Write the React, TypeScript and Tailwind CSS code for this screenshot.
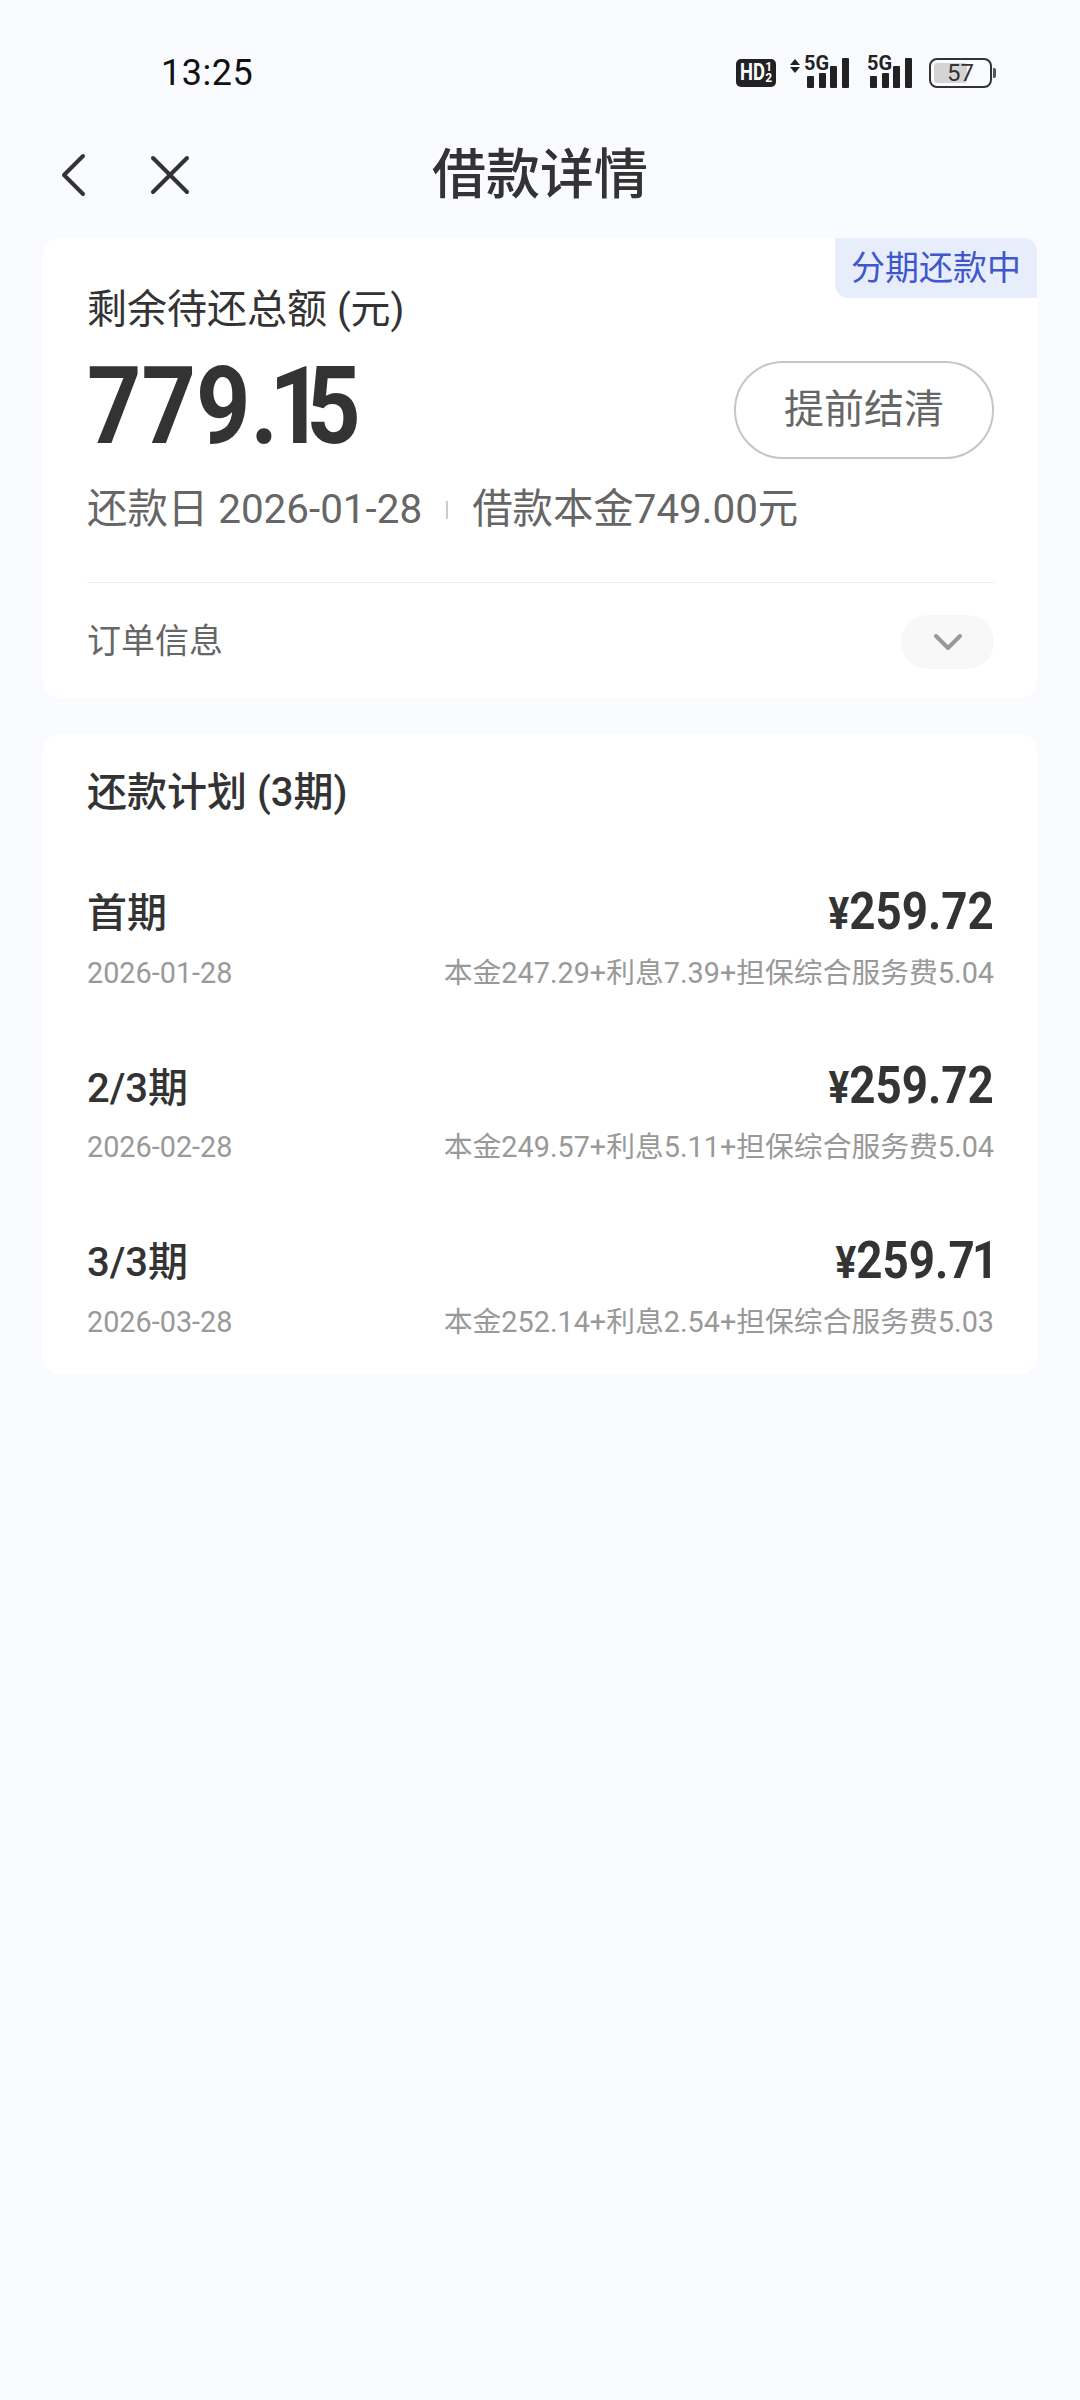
const font = "font-['Roboto','Noto_Sans_CJK_SC',sans-serif]";

const plans = [
  { name: "首期", amount: "259.72", date: "2026-01-28", detail: "本金247.29+利息7.39+担保综合服务费5.04" },
  { name: "2/3期", amount: "259.72", date: "2026-02-28", detail: "本金249.57+利息5.11+担保综合服务费5.04" },
  { name: "3/3期", amount: "259.71", date: "2026-03-28", detail: "本金252.14+利息2.54+担保综合服务费5.03" },
];

function Signal() {
  return (
    <div className="flex items-end gap-[4.67px] h-[30px]">
      <div className="w-[7px] h-[12px] rounded-[1px] bg-[#222]" />
      <div className="w-[7px] h-[15px] rounded-[1px] bg-[#222]" />
      <div className="w-[7px] h-[22px] rounded-[1px] bg-[#222]" />
      <div className="w-[7px] h-[30px] rounded-[1px] bg-[#222]" />
    </div>
  );
}

function FiveG() {
  return (
    <div className="absolute left-0 top-[-5px] text-[21px] leading-[20px] font-bold text-[#222] scale-x-[.95] origin-left">5G</div>
  );
}

function StatusBar() {
  return (
    <div className="flex items-center justify-between h-[114px] pl-[161px] pr-[84px] pt-[31px] text-[#111]">
      <div className="text-[36px] leading-[40px] tracking-[0.5px]">13:25</div>
      <div className="flex items-center">
        <div className="flex items-center w-[40px] h-[28px] rounded-[5px] bg-[#222] text-white font-bold pl-[4px]">
          <span className="text-[23px] leading-none scale-x-[.8] origin-left mr-[-6px]">HD</span>
          <span className="flex flex-col text-[12px] leading-[11px]">
            <span>1</span>
            <span>2</span>
          </span>
        </div>
        <div className="flex flex-col items-center gap-[2px] ml-[14px] mb-[14px]">
          <svg width="10" height="6" viewBox="0 0 10 6"><polygon points="5,0 10,6 0,6" fill="#222" /></svg>
          <svg width="10" height="6" viewBox="0 0 10 6"><polygon points="0,0 10,0 5,6" fill="#222" /></svg>
        </div>
        <div className="relative ml-[4px] pl-[3px]">
          <FiveG />
          <Signal />
        </div>
        <div className="relative ml-[18px] pl-[3px]">
          <FiveG />
          <Signal />
        </div>
        <div className="flex items-center ml-[17px]">
          <div className="relative w-[63px] h-[30px] rounded-[8px] border-2 border-[#333] p-[3px]">
            <div className="w-[33px] h-full rounded-[3px] bg-[#d4d4d4]" />
            <div className="absolute inset-0 flex items-center justify-center text-[24px] leading-none text-[#333]">57</div>
          </div>
          <div className="w-[3px] h-[10px] ml-[1px] rounded-r-[2px] bg-[#555]" />
        </div>
      </div>
    </div>
  );
}

function NavBar() {
  return (
    <div className="grid grid-cols-[1fr_auto_1fr] items-center h-[124px] text-[#333]">
      <div className="flex items-center pl-[60px] gap-[64px] mb-[2px]">
        <svg width="26" height="44" viewBox="0 0 26 44" fill="none" stroke="#333" strokeWidth="4" strokeLinecap="round" strokeLinejoin="round">
          <polyline points="23,3 4,22 23,41" />
        </svg>
        <svg width="40" height="40" viewBox="0 0 40 40" fill="none" stroke="#333" strokeWidth="4" strokeLinecap="round">
          <line x1="3" y1="3" x2="37" y2="37" />
          <line x1="37" y1="3" x2="3" y2="37" />
        </svg>
      </div>
      <div className="text-[54px] leading-[70px] font-medium">借款详情</div>
      <div />
    </div>
  );
}

function SummaryCard() {
  return (
    <div className="relative mx-[43px] h-[460px] rounded-[16px] bg-white pl-[44px] pr-[43px] pt-[47px]">
      <div className="absolute right-0 top-0 flex items-center justify-center w-[202px] h-[60px] rounded-tr-[14px] rounded-bl-[14px] bg-[#e8edfb] text-[34px] leading-none text-[#3f57cc]">分期还款中</div>
      <div className="h-[50px] text-[40px] leading-[50px] text-[#333]">剩余待还总额 (元)</div>
      <div className="flex items-center justify-between h-[137px]">
        <div className="mt-[5px] text-[108px] leading-none font-bold text-[#333] scale-x-[.88] origin-left">
          779<span className="tracking-[-10px]">.</span><span className="tracking-[-20px]">1</span>5
        </div>
        <button className="flex items-center justify-center w-[260px] h-[98px] mt-[12px] rounded-full border-2 border-[#c6c6c6] text-[40px] leading-none text-[#666]">提前结清</button>
      </div>
      <div className="flex items-center h-[50px] mt-[13px] text-[40.4px] leading-[50px] text-[#666]">
        <span>还款日 2026-01-28</span>
        <span className="w-[2px] h-[18px] mx-[24px] bg-[#ccc]" />
        <span>借款本金749.00元</span>
      </div>
      <div className="h-[1px] mt-[47px] bg-[#efefef]" />
      <div className="flex items-center justify-between h-[115px]">
        <div className="text-[34px] leading-none text-[#666]">订单信息</div>
        <div className="flex items-center justify-center w-[93px] h-[54px] mt-[2px] rounded-full bg-[#f8f8f8]">
          <svg width="30" height="18" viewBox="0 0 30 18" fill="none" stroke="#999" strokeWidth="4" strokeLinecap="round" strokeLinejoin="round">
            <polyline points="3,3 15,15 27,3" />
          </svg>
        </div>
      </div>
    </div>
  );
}

function PlanCard() {
  return (
    <div className="mx-[43px] mt-[36px] rounded-[16px] bg-white pl-[44px] pr-[43px] pt-[34px] pb-[32px]">
      <div className="h-[50px] text-[40px] leading-[50px] font-medium text-[#333]">还款计划 (3期)</div>
      <div className="flex flex-col gap-[61.5px] mt-[62px]">
        {plans.map((p) => (
          <div key={p.date} className="h-[113px]">
            <div className="flex items-center justify-between h-[60px]">
              <div className="pt-[8px] text-[40px] leading-none font-medium text-[#333]">{p.name}</div>
              <div className="flex items-baseline pt-[3px] font-bold text-[#333] scale-x-[.88] origin-right">
                <span className="text-[44px] leading-none">¥</span>
                <span className="text-[52px] leading-none">{p.amount.slice(0, 5)}</span>
                <span className={p.amount === "259.71" ? "text-[52px] leading-none ml-[-3px] mr-[-5px]" : "text-[52px] leading-none"}>{p.amount.slice(5)}</span>
              </div>
            </div>
            <div className="flex items-center justify-between h-[40px] mt-[13px] text-[#999]">
              <div className="text-[28.8px] leading-none">{p.date}</div>
              <div className="text-[28.8px] leading-none">{p.detail}</div>
            </div>
          </div>
        ))}
      </div>
    </div>
  );
}

export default function App() {
  return (
    <div className={`w-[1080px] h-[2400px] bg-[#fafbff] ${font}`}>
      <StatusBar />
      <NavBar />
      <SummaryCard />
      <PlanCard />
    </div>
  );
}
